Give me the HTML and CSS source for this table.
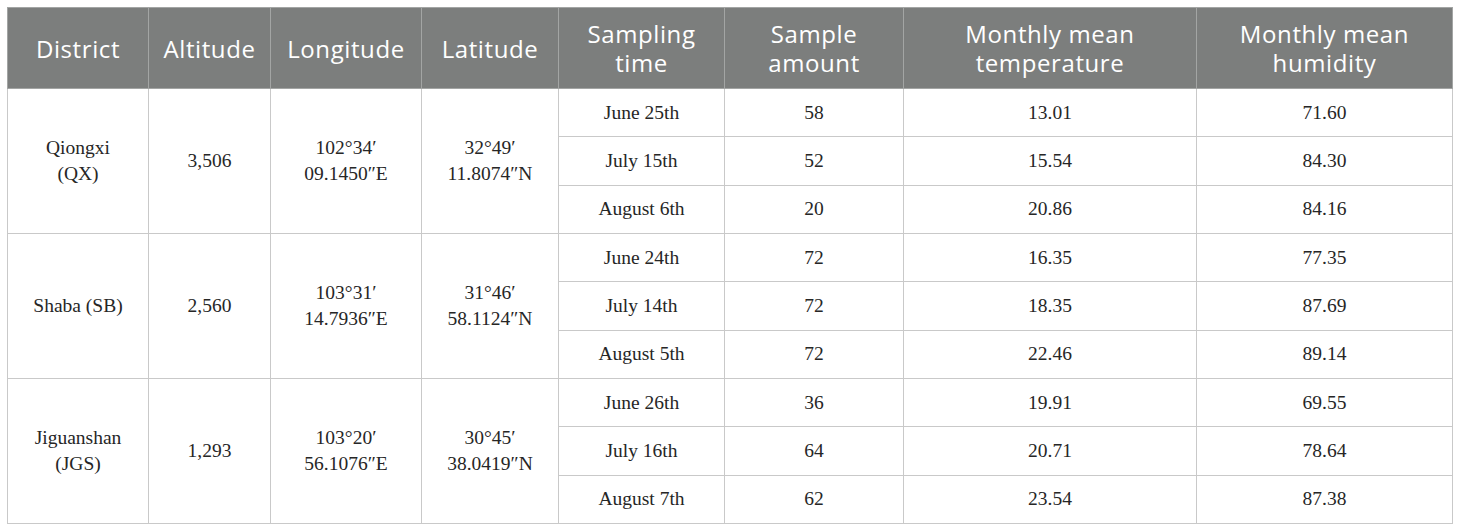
FILE: index.html
```html
<!DOCTYPE html>
<html>
<head>
<meta charset="utf-8">
<link rel="stylesheet" href="styles.css">
</head>
<body>
<table class="data">
  <colgroup>
    <col class="c1"><col class="c2"><col class="c3"><col class="c4"><col class="c5"><col class="c6"><col class="c7"><col class="c8">
  </colgroup>
  <thead>
    <tr class="head">
      <th>District</th>
      <th>Altitude</th>
      <th>Longitude</th>
      <th>Latitude</th>
      <th>Sampling<br>time</th>
      <th>Sample<br>amount</th>
      <th>Monthly mean<br>temperature</th>
      <th>Monthly mean<br>humidity</th>
    </tr>
  </thead>
  <tbody>
    <tr>
      <td rowspan="3">Qiongxi<br>(QX)</td>
      <td rowspan="3">3,506</td>
      <td rowspan="3">102°34′<br>09.1450″E</td>
      <td rowspan="3">32°49′<br>11.8074″N</td>
      <td>June 25th</td><td>58</td><td>13.01</td><td>71.60</td>
    </tr>
    <tr><td>July 15th</td><td>52</td><td>15.54</td><td>84.30</td></tr>
    <tr><td>August 6th</td><td>20</td><td>20.86</td><td>84.16</td></tr>
    <tr>
      <td rowspan="3">Shaba (SB)</td>
      <td rowspan="3">2,560</td>
      <td rowspan="3">103°31′<br>14.7936″E</td>
      <td rowspan="3">31°46′<br>58.1124″N</td>
      <td>June 24th</td><td>72</td><td>16.35</td><td>77.35</td>
    </tr>
    <tr><td>July 14th</td><td>72</td><td>18.35</td><td>87.69</td></tr>
    <tr><td>August 5th</td><td>72</td><td>22.46</td><td>89.14</td></tr>
    <tr>
      <td rowspan="3">Jiguanshan<br>(JGS)</td>
      <td rowspan="3">1,293</td>
      <td rowspan="3">103°20′<br>56.1076″E</td>
      <td rowspan="3">30°45′<br>38.0419″N</td>
      <td>June 26th</td><td>36</td><td>19.91</td><td>69.55</td>
    </tr>
    <tr><td>July 16th</td><td>64</td><td>20.71</td><td>78.64</td></tr>
    <tr><td>August 7th</td><td>62</td><td>23.54</td><td>87.38</td></tr>
  </tbody>
</table>
</body>
</html>
```
FILE: styles.css
```css
html, body {
  margin: 0;
  padding: 0;
  background: #ffffff;
}
body {
  padding: 7px;
}
.data {
  border-collapse: collapse;
  table-layout: fixed;
  width: 1446px;
}
.c1 { width: 141px; }
.c2 { width: 122px; }
.c3 { width: 151px; }
.c4 { width: 137px; }
.c5 { width: 166px; }
.c6 { width: 179px; }
.c7 { width: 293px; }
.c8 { width: 256px; }

.data th {
  background: #7c7e7d;
  color: #ffffff;
  font-family: "Open Sans", Lato, sans-serif;
  font-weight: 400;
  font-size: 24px;
  letter-spacing: 0.6px;
  line-height: 29px;
  border: 1px solid #a3a5a4;
  text-align: center;
  vertical-align: middle;
  padding: 0;
  height: 80px;
}
.data td {
  font-family: "Liberation Serif", "Times New Roman", serif;
  font-size: 19.5px;
  line-height: 26px;
  color: #262626;
  border: 1px solid #c9c9c9;
  text-align: center;
  vertical-align: middle;
  padding: 0;
  height: 47.33px;
}
```
